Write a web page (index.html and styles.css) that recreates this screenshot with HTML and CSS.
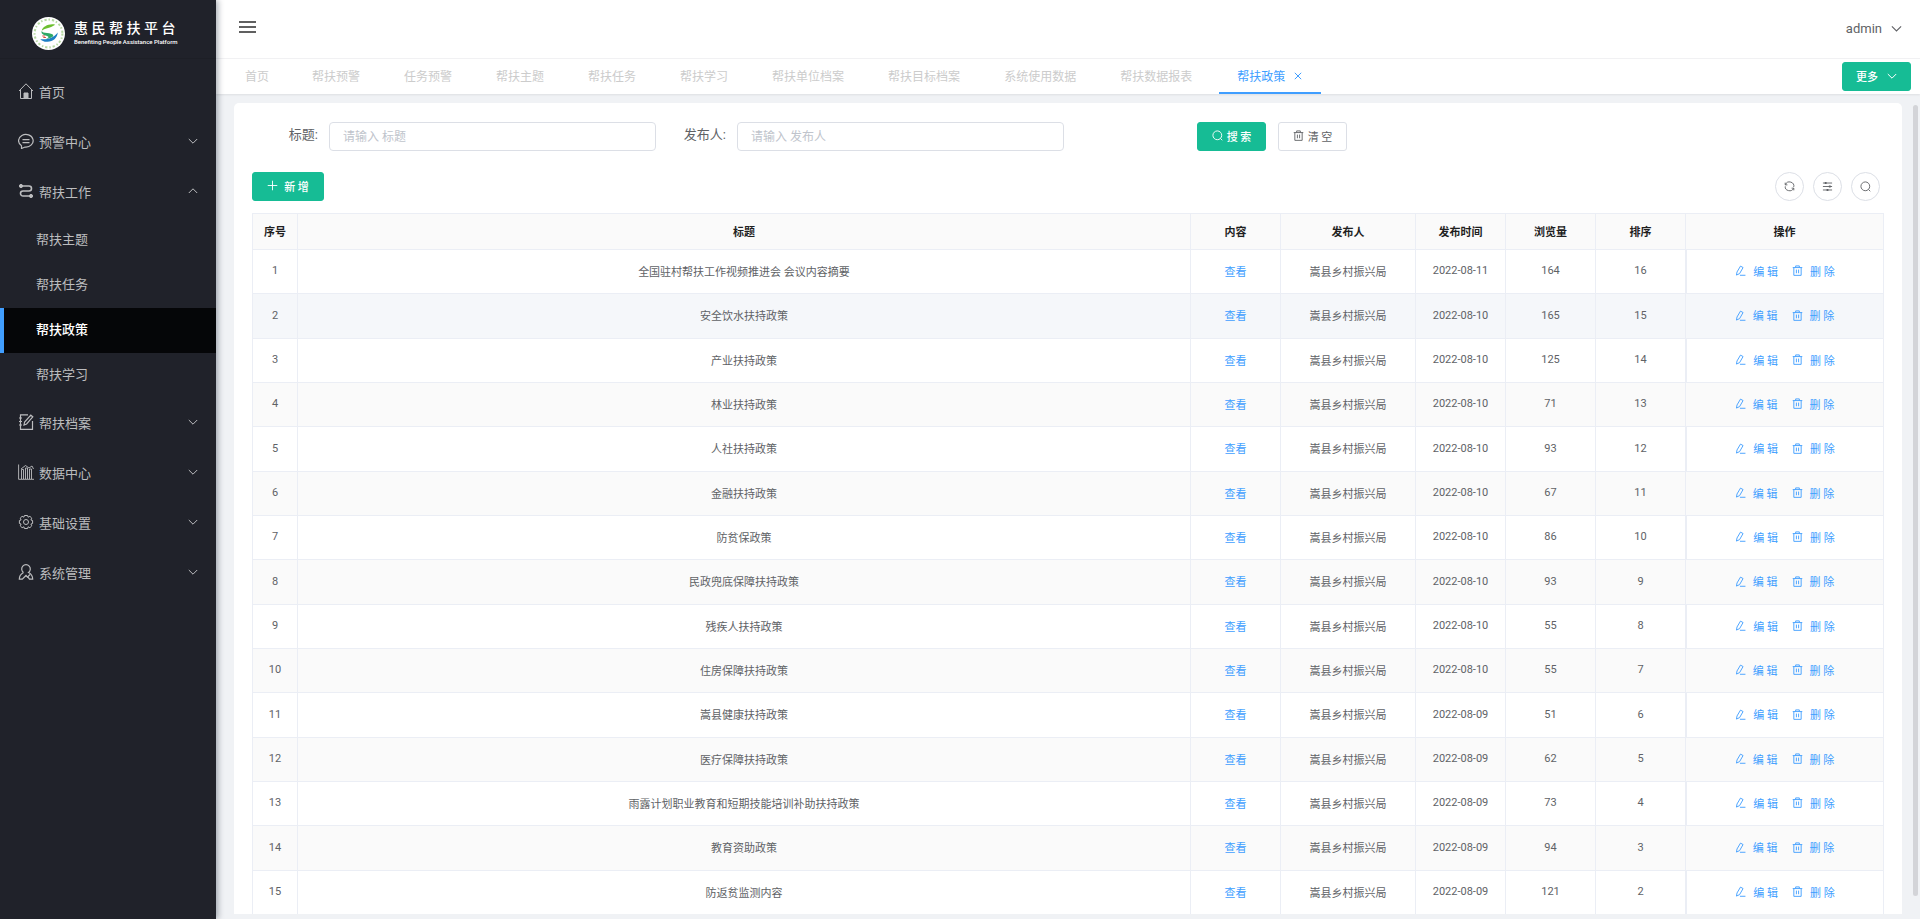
FILE: index.html
```html
<!DOCTYPE html>
<html lang="zh-CN">
<head>
<meta charset="utf-8">
<title>惠民帮扶平台</title>
<link rel="stylesheet" href="styles.css">
</head>
<body>
<svg class="sprite" aria-hidden="true">
  <symbol id="i-down" viewBox="0 0 10 10"><path d="M.8 3 5 7.200 9.200 3"/></symbol>
  <symbol id="i-up" viewBox="0 0 10 10"><path d="M.8 7 5 2.800 9.200 7"/></symbol>
  <symbol id="i-edit" viewBox="0 0 12 12"><path d="M2.200 7.600 6 1.200 8.800 2.800 5 9.400 1.600 11zM5.400 11.200h6"/></symbol>
  <symbol id="i-del" viewBox="0 0 12 12"><path d="M.8 2.800h10.400M4 2.600V1h4v1.600M2 3v8.300h8V3M4.800 5v4M7.200 5v4"/></symbol>
  <symbol id="i-search" viewBox="0 0 12 12"><circle cx="5.800" cy="5.800" r="4.800"/><path d="m9.200 9.200 2 2"/></symbol>
</svg>
<div class="app">
  <aside class="sidebar">
    <div class="brand">
      <svg class="brand-mark" viewBox="0 0 32 32" aria-hidden="true">
        <circle cx="16" cy="16" r="16" fill="#fff"/>
        <circle cx="16" cy="16" r="13.500" fill="none" stroke="#86bf62" stroke-width="2" stroke-dasharray="2.200 1.800 1.400 2" opacity=".6"/>
        <circle cx="16" cy="16" r="11.500" fill="#fff"/>
        <path d="M22.500 7.500c-5.500-1.500-12.500 1.800-13 5.800 3.500-2.800 8.500-2.500 13-5.800z" fill="#6cbf2f"/>
        <path d="M9.500 13.300c0 3.200 10 1.500 11 4.200.6 2-3 3.500-7 3.700 4.500-1.500 2-2.500-.5-3.200-2.500-.8-4.500-2.300-3.500-4.700z" fill="#2fa866"/>
        <path d="M8 21.500c6.500.8 12.500-.8 17-6.500-.5 5.500-5 9.300-10.500 9-3 0-5-1-6.500-2.500z" fill="#1d7fc4"/>
        <path d="M10 18.500h2.500M11 19.800h2.500" stroke="#d8473c" stroke-width="1"/>
      </svg>
      <div class="brand-text">
        <strong>惠 民 帮 扶 平 台</strong>
        <small>Benefiting People Assistance Platform</small>
      </div>
    </div>
    <nav class="menu">
      <a class="item" href="#"><svg class="mi" viewBox="0 0 16 16"><path d="M1 8 8 .8 15 8M2.500 6.800v8.700h11V6.800"/><path d="M6 10h4v5.500H6z" fill="currentColor"/></svg><span>首页</span></a>
      <a class="item" href="#"><svg class="mi" viewBox="0 0 16 16"><path d="M3.500 12.800A7.300 6.300 0 1 1 7 14L3.500 15.500zM4.500 6.600h7M4.500 9.600h7" stroke-width="1.200"/></svg><span>预警中心</span><svg class="arrow"><use href="#i-down"/></svg></a>
      <a class="item" href="#"><svg class="mi" viewBox="0 0 16 16"><path d="M3.500 3H11a2.500 2.500 0 0 1 0 5H5a2.500 2.500 0 0 0 0 5h7.500" stroke-width="1.600"/><circle cx="3" cy="3" r="1.600" fill="currentColor"/><circle cx="13" cy="13" r="1.600" fill="currentColor"/></svg><span>帮扶工作</span><svg class="arrow"><use href="#i-up"/></svg></a>
      <div class="submenu">
        <a class="sub" href="#">帮扶主题</a>
        <a class="sub" href="#">帮扶任务</a>
        <a class="sub active" href="#">帮扶政策</a>
        <a class="sub" href="#">帮扶学习</a>
      </div>
      <a class="item" href="#"><svg class="mi" viewBox="0 0 16 16"><path d="M10 .8H2.500v14.500h12V7M1 4h3M1 7.500h3M1 11h3M6 11l.6-3L12.800 1.200l2 1.700L8.600 10z" stroke-width="1.200"/></svg><span>帮扶档案</span><svg class="arrow"><use href="#i-down"/></svg></a>
      <a class="item" href="#"><svg class="mi" viewBox="0 0 16 16"><path d="M.6.5v14.800H16M3.500 15V5.500h2V15M7.500 15V4h2v11M11.500 15V5h2v10M3 5l4.500-3.500L11 4l3-2 1.500 3" stroke-width=".9"/></svg><span>数据中心</span><svg class="arrow"><use href="#i-down"/></svg></a>
      <a class="item" href="#"><svg class="mi" viewBox="0 0 16 16"><path d="M6.400 1.500h3.200l.5 1.700 1.800-.9 1.900 1.900-.9 1.800 1.700.5v3l-1.700.5.9 1.800-1.900 1.900-1.800-.9-.5 1.700H6.400l-.5-1.700-1.800.9-1.900-1.900.9-1.800-1.700-.5v-3l1.700-.5-.9-1.800 1.900-1.900 1.800.9z"/><circle cx="8" cy="8" r="2.500"/></svg><span>基础设置</span><svg class="arrow"><use href="#i-down"/></svg></a>
      <a class="item" href="#"><svg class="mi" viewBox="0 0 16 16"><path d="M5.500 8.500a4.300 4.300 0 1 1 5 0c2.700 1.300 4.200 3.500 4.200 6.700h-3.200l-1.500-2M5.500 8.500C2.800 10 1.300 12 1.300 15.200h3L8 11.500l1.500 1.700L12 10.500" stroke-width="1.200"/></svg><span>系统管理</span><svg class="arrow"><use href="#i-down"/></svg></a>
    </nav>
  </aside>

  <div class="main">
    <header class="topbar">
      <button class="burger" type="button" aria-label="折叠菜单"><svg viewBox="0 0 17 14"><path d="M0 2h17M0 7h17M0 12h17"/></svg></button>
      <button class="user" type="button">admin<svg><use href="#i-down"/></svg></button>
    </header>
    <div class="tabbar">
      <nav class="tabs">
        <a href="#">首页</a><a href="#">帮扶预警</a><a href="#">任务预警</a><a href="#">帮扶主题</a><a href="#">帮扶任务</a><a href="#">帮扶学习</a><a href="#">帮扶单位档案</a><a href="#">帮扶目标档案</a><a href="#">系统使用数据</a><a href="#">帮扶数据报表</a><a class="on" href="#">帮扶政策<svg viewBox="0 0 10 10"><path d="m1.800 1.800 6.400 6.400m0-6.400-6.400 6.400"/></svg></a>
      </nav>
      <button class="btn primary more" type="button">更多<svg><use href="#i-down"/></svg></button>
    </div>

    <div class="content">
      <section class="card">
        <form class="search">
          <div class="field"><label for="title">标题:</label><input id="title" type="text" placeholder="请输入 标题"></div>
          <div class="field"><label for="author">发布人:</label><input id="author" type="text" placeholder="请输入 发布人"></div>
          <div class="actions">
            <button class="btn primary" type="button"><svg><use href="#i-search"/></svg>搜 索</button>
            <button class="btn" type="button"><svg><use href="#i-del"/></svg>清 空</button>
          </div>
        </form>
        <div class="toolbar">
          <button class="btn primary add" type="button"><svg viewBox="0 0 12 12"><path d="M6 .8v10.400M.8 6h10.400"/></svg>新 增</button>
          <div class="tools">
            <button type="button" aria-label="刷新"><svg viewBox="0 0 12 12"><path d="M1.300 4.200V1.800M1.300 4.200h2.400M1.600 4A4.700 4.200 0 0 1 10.600 6.500M10.700 7.800v2.400M10.700 7.800H8.300M10.400 8A4.700 4.200 0 0 1 1.400 5.800"/></svg></button>
            <button type="button" aria-label="列设置"><svg viewBox="0 0 12 12"><path d="M1 2.200h10M1 6h10M1 9.800h10"/><path d="M3 2.200h2M7.500 6h2M5 9.800h2" stroke-width="2.400"/></svg></button>
            <button type="button" aria-label="搜索"><svg><use href="#i-search"/></svg></button>
          </div>
        </div>
        <table class="grid">
          <colgroup><col class="c45"><col><col class="c90"><col class="c135"><col class="c90"><col class="c90"><col class="c90"><col class="c198"></colgroup>
          <thead><tr><th>序号</th><th>标题</th><th>内容</th><th>发布人</th><th>发布时间</th><th>浏览量</th><th>排序</th><th>操作</th></tr></thead>
          <tbody>
            <tr><td>1</td><td>全国驻村帮扶工作视频推进会 会议内容摘要</td><td><a href="#">查看</a></td><td>嵩县乡村振兴局</td><td>2022-08-11</td><td>164</td><td>16</td><td><button type="button"><svg><use href="#i-edit"/></svg>编 辑</button><button type="button"><svg><use href="#i-del"/></svg>删 除</button></td></tr>
            <tr class="hover"><td>2</td><td>安全饮水扶持政策</td><td><a href="#">查看</a></td><td>嵩县乡村振兴局</td><td>2022-08-10</td><td>165</td><td>15</td><td><button type="button"><svg><use href="#i-edit"/></svg>编 辑</button><button type="button"><svg><use href="#i-del"/></svg>删 除</button></td></tr>
            <tr><td>3</td><td>产业扶持政策</td><td><a href="#">查看</a></td><td>嵩县乡村振兴局</td><td>2022-08-10</td><td>125</td><td>14</td><td><button type="button"><svg><use href="#i-edit"/></svg>编 辑</button><button type="button"><svg><use href="#i-del"/></svg>删 除</button></td></tr>
            <tr><td>4</td><td>林业扶持政策</td><td><a href="#">查看</a></td><td>嵩县乡村振兴局</td><td>2022-08-10</td><td>71</td><td>13</td><td><button type="button"><svg><use href="#i-edit"/></svg>编 辑</button><button type="button"><svg><use href="#i-del"/></svg>删 除</button></td></tr>
            <tr><td>5</td><td>人社扶持政策</td><td><a href="#">查看</a></td><td>嵩县乡村振兴局</td><td>2022-08-10</td><td>93</td><td>12</td><td><button type="button"><svg><use href="#i-edit"/></svg>编 辑</button><button type="button"><svg><use href="#i-del"/></svg>删 除</button></td></tr>
            <tr><td>6</td><td>金融扶持政策</td><td><a href="#">查看</a></td><td>嵩县乡村振兴局</td><td>2022-08-10</td><td>67</td><td>11</td><td><button type="button"><svg><use href="#i-edit"/></svg>编 辑</button><button type="button"><svg><use href="#i-del"/></svg>删 除</button></td></tr>
            <tr><td>7</td><td>防贫保政策</td><td><a href="#">查看</a></td><td>嵩县乡村振兴局</td><td>2022-08-10</td><td>86</td><td>10</td><td><button type="button"><svg><use href="#i-edit"/></svg>编 辑</button><button type="button"><svg><use href="#i-del"/></svg>删 除</button></td></tr>
            <tr><td>8</td><td>民政兜底保障扶持政策</td><td><a href="#">查看</a></td><td>嵩县乡村振兴局</td><td>2022-08-10</td><td>93</td><td>9</td><td><button type="button"><svg><use href="#i-edit"/></svg>编 辑</button><button type="button"><svg><use href="#i-del"/></svg>删 除</button></td></tr>
            <tr><td>9</td><td>残疾人扶持政策</td><td><a href="#">查看</a></td><td>嵩县乡村振兴局</td><td>2022-08-10</td><td>55</td><td>8</td><td><button type="button"><svg><use href="#i-edit"/></svg>编 辑</button><button type="button"><svg><use href="#i-del"/></svg>删 除</button></td></tr>
            <tr><td>10</td><td>住房保障扶持政策</td><td><a href="#">查看</a></td><td>嵩县乡村振兴局</td><td>2022-08-10</td><td>55</td><td>7</td><td><button type="button"><svg><use href="#i-edit"/></svg>编 辑</button><button type="button"><svg><use href="#i-del"/></svg>删 除</button></td></tr>
            <tr><td>11</td><td>嵩县健康扶持政策</td><td><a href="#">查看</a></td><td>嵩县乡村振兴局</td><td>2022-08-09</td><td>51</td><td>6</td><td><button type="button"><svg><use href="#i-edit"/></svg>编 辑</button><button type="button"><svg><use href="#i-del"/></svg>删 除</button></td></tr>
            <tr><td>12</td><td>医疗保障扶持政策</td><td><a href="#">查看</a></td><td>嵩县乡村振兴局</td><td>2022-08-09</td><td>62</td><td>5</td><td><button type="button"><svg><use href="#i-edit"/></svg>编 辑</button><button type="button"><svg><use href="#i-del"/></svg>删 除</button></td></tr>
            <tr><td>13</td><td>雨露计划职业教育和短期技能培训补助扶持政策</td><td><a href="#">查看</a></td><td>嵩县乡村振兴局</td><td>2022-08-09</td><td>73</td><td>4</td><td><button type="button"><svg><use href="#i-edit"/></svg>编 辑</button><button type="button"><svg><use href="#i-del"/></svg>删 除</button></td></tr>
            <tr><td>14</td><td>教育资助政策</td><td><a href="#">查看</a></td><td>嵩县乡村振兴局</td><td>2022-08-09</td><td>94</td><td>3</td><td><button type="button"><svg><use href="#i-edit"/></svg>编 辑</button><button type="button"><svg><use href="#i-del"/></svg>删 除</button></td></tr>
            <tr><td>15</td><td>防返贫监测内容</td><td><a href="#">查看</a></td><td>嵩县乡村振兴局</td><td>2022-08-09</td><td>121</td><td>2</td><td><button type="button"><svg><use href="#i-edit"/></svg>编 辑</button><button type="button"><svg><use href="#i-del"/></svg>删 除</button></td></tr>
          </tbody>
        </table>
      </section>
      <div class="scrollbar"><div class="thumb"></div></div>
    </div>
  </div>
</div>
</body>
</html>
```
FILE: styles.css
```css
* { box-sizing: border-box; }
body {
  margin: 0;
  font-family: Roboto, "Noto Sans CJK SC", sans-serif;
  font-size: 11px;
  color: #606266;
  background: #f0f2f5;
}
a { color: inherit; text-decoration: none; }
button { font: inherit; color: inherit; background: none; border: 0; padding: 0; cursor: pointer; }
svg { fill: none; stroke: currentColor; flex: none; }
.sprite { display: none; }

.app { display: flex; height: 100vh; overflow: hidden; }

/* sidebar */
.sidebar {
  flex: 0 0 216px;
  z-index: 2;
  background: #20222a;
  color: #bcbdbf;
  box-shadow: 2px 0 6px rgba(0, 21, 41, .35);
}
.brand {
  display: flex;
  align-items: center;
  gap: 9px;
  height: 59px;
  padding: 8px 32px 0;
  border-bottom: 1px solid #1d1f26;
}
.brand-mark { width: 33px; height: 33px; stroke: none; }
.brand-text { display: flex; flex-direction: column; gap: 2px; color: #fff; white-space: nowrap; }
.brand-text strong { font-size: 14px; line-height: 16px; font-weight: 500; }
.brand-text small { font-size: 6px; line-height: 8px; font-weight: 500; }
.menu { padding-top: 9px; font-size: 13px; }
.item { display: flex; align-items: center; gap: 5px; height: 50px; padding: 0 18px 4px; }
.mi { width: 16px; height: 16px; }
.arrow { width: 10px; height: 10px; margin-left: auto; }
.submenu { padding-bottom: 1px; }
.sub { display: flex; align-items: center; height: 45px; padding: 0 0 4px 36px; }
.sub.active {
  padding-left: 32px;
  border-left: 4px solid #409eff;
  background: #050608;
  color: #fff;
  font-weight: 500;
}

/* header */
.main { flex: 1; min-width: 0; display: flex; flex-direction: column; }
.topbar {
  display: flex;
  justify-content: space-between;
  align-items: center;
  height: 59px;
  padding: 0 18px 2px 23px;
  background: #fff;
  border-bottom: 1px solid #f2f2f4;
}
.burger svg { display: block; width: 17px; height: 14px; stroke: #606060; stroke-width: 2; }
.burger { padding-bottom: 2px; }
.user { display: flex; align-items: center; gap: 9px; font-size: 13px; }
.user svg { width: 11px; height: 11px; }
.tabbar {
  display: flex;
  justify-content: space-between;
  align-items: center;
  height: 35px;
  padding: 0 9px 0 7px;
  background: #fff;
  box-shadow: 0 1px 2px rgba(0, 0, 0, .08);
}
.tabs { display: flex; align-self: stretch; font-size: 12px; color: #ccc; white-space: nowrap; }
.tabs a { display: flex; align-items: center; padding: 0 22px 2px; }
.tabs a:first-child { padding-right: 21px; }
.tabs .on { gap: 8px; margin-left: 5px; padding: 0 18px; color: #409eff; border-bottom: 2px solid #409eff; }
.tabs svg { width: 10px; height: 10px; }

/* buttons */
.btn {
  display: flex;
  align-items: center;
  justify-content: center;
  gap: 4px;
  height: 29px;
  min-width: 69px;
  padding-bottom: 2px;
  border: 1px solid #dcdfe6;
  border-radius: 3px;
  background: #fff;
}
.btn svg { width: 11px; height: 11px; }
.primary { background: #16bc95; border-color: #16bc95; color: #fff; font-weight: 500; }
.more { gap: 9px; }
.more svg { width: 10px; height: 10px; }
.add { gap: 6px; min-width: 72px; }

/* content */
.content { flex: 1; min-height: 0; display: flex; padding: 9px 2px 5px 18px; }
.card { flex: 1; min-width: 0; padding: 19px 18px 0; background: #fff; border-radius: 5px 5px 0 0; overflow: hidden; }
.scrollbar { width: 16px; padding: 2px 0 18px 11px; }
.thumb { width: 5px; height: 100%; border-radius: 3px; background: #d3d4d8; }

.search { display: grid; grid-template-columns: repeat(4, 1fr); margin-bottom: 21px; }
.field { display: flex; padding-right: 4px; }
.field label { width: 77px; padding-right: 11px; text-align: right; font-size: 13px; line-height: 26px; }
.field input {
  flex: 1;
  min-width: 0;
  height: 29px;
  padding: 0 13px;
  border: 1px solid #dcdfe6;
  border-radius: 4px;
  font: inherit;
  font-size: 12px;
  background: #fff;
}
.field input::placeholder { color: #c0c4cc; }
.actions { display: flex; justify-content: center; gap: 12px; }

.toolbar { display: flex; justify-content: space-between; margin-bottom: 12px; }
.tools { display: flex; gap: 9px; padding-right: 4px; }
.tools button {
  display: flex;
  align-items: center;
  justify-content: center;
  width: 29px;
  height: 29px;
  border: 1px solid #dcdfe6;
  border-radius: 50%;
}
.tools svg { width: 11px; height: 11px; }

.grid {
  width: 100%;
  table-layout: fixed;
  border-collapse: separate;
  border-spacing: 0;
  border: 1px solid #ebeef5;
  border-width: 1px 0 0 1px;
  text-align: center;
}
.c45 { width: 45px; }
.c90 { width: 90px; }
.c135 { width: 135px; }
.c198 { width: 198px; }
.grid th, .grid td { padding: 0 0 2px; border: 1px solid #ebeef5; border-width: 0 1px 1px 0; }
.grid th { height: 36px; background: #fafafa; color: #1f1f1f; font-weight: 700; }
.grid td { height: 44px; }
.grid tr:nth-child(3n+2) td { height: 45px; }
.grid tr:nth-child(even) td { background: #fafafa; }
.grid tr.hover td { background: #f5f7fa; }
.grid tr:nth-child(odd) td:last-child { border-left-width: 1px; }
.grid a, .grid button { color: #409eff; }
.grid button { display: inline-flex; align-items: center; gap: 7px; vertical-align: middle; }
.grid button + button { margin-left: 14px; }
.grid button svg { width: 11px; height: 11px; }
```
